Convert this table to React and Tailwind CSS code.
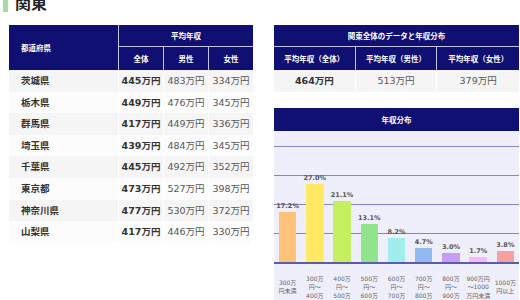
import React from "react";

const prefs = [
  ["茨城県", "445", "483", "334"],
  ["栃木県", "449", "476", "345"],
  ["群馬県", "417", "449", "336"],
  ["埼玉県", "439", "484", "345"],
  ["千葉県", "445", "492", "352"],
  ["東京都", "473", "527", "398"],
  ["神奈川県", "477", "530", "372"],
  ["山梨県", "417", "446", "330"],
];

const bars = [
  { p: 17.2, c: "bg-[#ffc078]", l: ["300万", "円未満"], pt: "pt-[14.5px]" },
  { p: 27.0, c: "bg-[#ffe965]", l: ["300万", "円〜", "400万", "円未満"], pt: "pt-[10.75px]" },
  { p: 21.1, c: "bg-[#c6ef60]", l: ["400万", "円〜", "500万", "円未満"], pt: "pt-[10.75px]" },
  { p: 13.1, c: "bg-[#90e48e]", l: ["500万", "円〜", "600万", "円未満"], pt: "pt-[10.75px]" },
  { p: 8.2, c: "bg-[#a0eeec]", l: ["600万", "円〜", "700万", "円未満"], pt: "pt-[10.75px]" },
  { p: 4.7, c: "bg-[#92baf0]", l: ["700万", "円〜", "800万", "円未満"], pt: "pt-[10.75px]" },
  { p: 3.0, c: "bg-[#c89cf4]", l: ["800万", "円〜", "900万", "円未満"], pt: "pt-[10.75px]" },
  { p: 1.7, c: "bg-[#f8b8f8]", l: ["900万円", "〜1000", "万円未満"], pt: "pt-[10.75px]" },
  { p: 3.8, c: "bg-[#f6a0a0]", l: ["1000万", "円以上"], pt: "pt-[14.5px]" },
];

const hd = "[font-family:'Noto_Sans_CJK_JP',sans-serif]";
const body = "[font-family:'DejaVu_Sans','Noto_Sans_CJK_JP',sans-serif]";

export default function App() {
  return (
    <div className="w-[520px] h-[300px] overflow-hidden bg-white">
      {/* heading */}
      <div className="-mt-[8px] h-[20px] flex items-stretch pl-[3px] gap-[7px]">
        <div className="w-[5px] bg-[#a4dca2]" />
        <div className={`${hd} text-[16px] leading-[20px] font-bold text-[#222]`}>関東</div>
      </div>

      <div className="mt-[13px] flex pl-[9px] gap-[21px]">
        {/* left table */}
        <div className="w-[244px]">
          <div className={`${hd} grid grid-cols-[110px_45px_45px_44px] grid-rows-[22px_23px] bg-[#101073] text-white text-[7.5px] font-bold leading-none`}>
            <div className="row-span-2 flex items-center pl-[12px] border-r border-[#c4c4e2]">都道府県</div>
            <div className="col-span-3 flex items-center justify-center border-b border-[#c4c4e2]">平均年収</div>
            <div className="flex items-center justify-center border-r border-[#c4c4e2]">全体</div>
            <div className="flex items-center justify-center border-r border-[#c4c4e2]">男性</div>
            <div className="flex items-center justify-center">女性</div>
          </div>
          {prefs.map((r, i) => (
            <div
              key={r[0]}
              className={`${body} grid grid-cols-[110px_45px_45px_44px] h-[21.6px] text-[9.5px] leading-none ${i % 2 === 0 ? "bg-[#f5f5f5]" : "bg-[#fcfcfc]"}`}
            >
              <div className="flex items-center pl-[12px] font-bold text-[#333] border-r border-white">{r[0]}</div>
              <div className="flex items-center justify-center font-bold text-[#333] border-r border-white">{r[1]}万円</div>
              <div className="flex items-center justify-center text-[#555] border-r border-white">{r[2]}万円</div>
              <div className="flex items-center justify-center text-[#555]">{r[3]}万円</div>
            </div>
          ))}
        </div>

        {/* right column */}
        <div className="w-[245px]">
          <div className={`${hd} bg-[#101073] text-white text-[7.5px] font-bold leading-none`}>
            <div className="h-[22px] flex items-center justify-center border-b border-[#c4c4e2]">関東全体のデータと年収分布</div>
            <div className="h-[23px] grid grid-cols-3">
              <div className="flex items-center justify-center border-r border-[#c4c4e2]">平均年収（全体）</div>
              <div className="flex items-center justify-center border-r border-[#c4c4e2]">平均年収（男性）</div>
              <div className="flex items-center justify-center">平均年収（女性）</div>
            </div>
          </div>
          <div className={`${body} h-[22px] grid grid-cols-3 bg-[#f5f5f5] text-[9.5px] leading-none`}>
            <div className="flex items-center justify-center font-bold text-[#333] border-r border-white">464万円</div>
            <div className="flex items-center justify-center text-[#555] border-r border-white">513万円</div>
            <div className="flex items-center justify-center text-[#555]">379万円</div>
          </div>

          <div className="mt-[16px]">
            <div className={`${hd} h-[23px] flex items-center justify-center bg-[#101073] text-white text-[7.5px] font-bold leading-none`}>
              年収分布
            </div>
            <div className="bg-[#efeffb] h-[169px]">
              <div className="relative h-[133px] border-b-2 border-[#5c5caa]">
                <div className="absolute left-0 right-0 top-[15px] h-px bg-[#8585c6]" />
                <div className="absolute left-0 right-0 top-[44px] h-px bg-[#8585c6]" />
                <div className="absolute left-0 right-0 top-[73px] h-px bg-[#8585c6]" />
                <div className="absolute left-0 right-0 top-[102px] h-px bg-[#8585c6]" />
                <div className="relative grid grid-cols-9 h-full items-end">
                  {bars.map((b) => (
                    <div key={b.l.join("")} className="flex flex-col items-center justify-end">
                      <div className={`${body} text-[6.5px] leading-[9px] mb-[1px] font-bold text-[#555]`}>
                        {b.p.toFixed(1)}%
                      </div>
                      <div className={`w-[17.5px] ${b.c}`} style={{ height: `${b.p * 2.9}px` }} />
                    </div>
                  ))}
                </div>
              </div>
              <div className="grid grid-cols-9">
                {bars.map((b) => (
                  <div
                    key={b.l.join("-")}
                    className={`${body} ${b.pt} flex flex-col items-center text-[6px] leading-[8.5px] text-[#666] whitespace-nowrap`}
                  >
                    {b.l.map((t) => (
                      <span key={t}>{t}</span>
                    ))}
                  </div>
                ))}
              </div>
            </div>
          </div>
        </div>
      </div>
    </div>
  );
}
